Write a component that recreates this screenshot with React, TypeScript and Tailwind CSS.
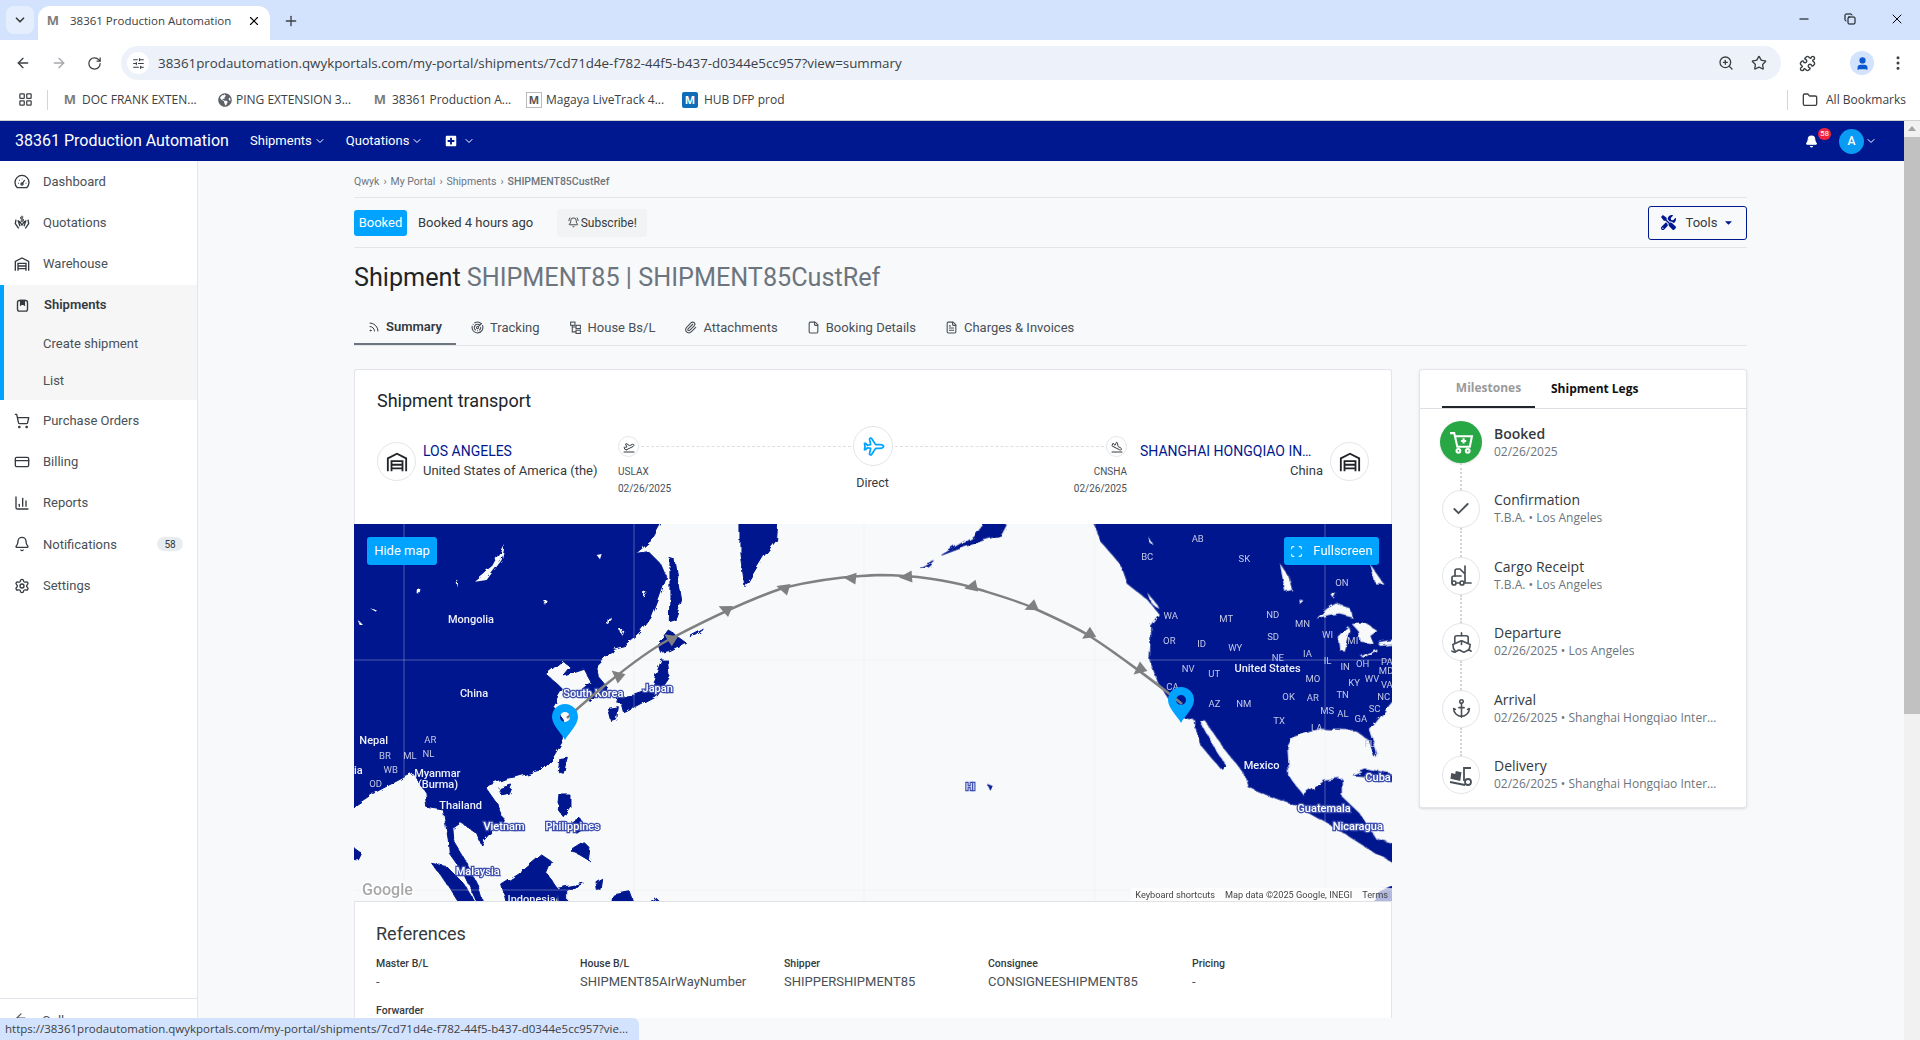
import {
  Anchor,
  ArrowLeft,
  ArrowRight,
  BellRing,
  Bell,
  ChartColumn,
  Check,
  ChevronDown,
  CreditCard,
  Copy,
  File,
  FileText,
  Folder,
  Forklift,
  LayoutGrid,
  Minus,
  MoreVertical,
  Paperclip,
  Plane,
  PlaneLanding,
  PlaneTakeoff,
  Plus,
  Puzzle,
  Radar,
  RotateCw,
  Rss,
  Scan,
  Settings,
  Ship,
  ShoppingCart,
  SlidersHorizontal,
  Star,
  User,
  X,
  ZoomIn,
} from "lucide-react";
import { FaPlusSquare, FaTools, FaCaretDown, FaGlobeAmericas } from "react-icons/fa";

const NAVY = "#00188f";
const SEA = "#f8f9fb";

// land outlines traced in crop coordinates, west and east halves of the map
const westLand = [
  "-20,-20 950,-20 905,60 858,100 895,95 935,135 950,170 925,240 905,290 870,340 830,375 790,385 770,410 740,440 745,470 770,500 720,545 700,510 725,490 700,445 640,465 660,440 640,425 590,465 620,490 640,510 610,560 640,600 640,660 610,710 570,750 500,770 470,775 405,800 440,850 460,900 395,975 380,940 330,905 308,920 312,965 345,1020 385,1100 405,1170 392,1170 340,1060 298,1000 295,960 280,870 230,862 225,815 190,760 165,770 70,820 -20,880",
  "245,1030 290,1040 340,1090 390,1170 340,1170 290,1090",
  "1170,-20 1285,-20 1280,60 1240,110 1185,200 1170,100",
  "960,115 975,120 995,240 975,300 958,305 960,230",
  "955,330 1010,370 960,395 935,400 925,370",
  "935,420 955,420 960,470 920,530 860,562 800,548 805,530 855,525 900,510",
  "775,565 805,560 800,600 785,605",
  "815,555 845,548 840,565 820,575",
  "630,715 652,712 640,760 625,755",
  "450,805 485,795 475,820 455,825",
  "630,825 660,825 660,860 640,890 625,870",
  "665,905 690,895 705,925 680,940",
  "660,990 700,965 720,985 715,1020 690,1005",
  "455,1095 510,1060 575,1005 605,1025 590,1060 625,1110 610,1170 475,1170",
  "622,1105 700,1090 650,1112 650,1170 625,1170",
  "738,1085 755,1075 750,1110 742,1112",
  "790,1125 840,1115 860,1170 780,1170",
  "880,1170 920,1135 925,1170",
  "-20,960 35,1000 25,1020 -20,1015",
  "1020,350 1060,328 1040,345",
];

const westLakes = [
  "465,75 455,120 410,180 375,185 430,140",
  "200,210 215,208 212,220 200,220",
  "320,190 328,185 325,205",
  "60,265 80,270 78,275",
  "580,240 590,240 585,255",
  "740,105 755,102 750,118",
  "880,215 890,215 878,235",
  "810,330 820,330 815,345",
  "770,295 785,292 768,312",
  "25,300 42,318 32,318",
];

const eastLand = [
  "680,-20 720,70 770,130 790,190 850,240 885,285 860,320 855,420 880,490 905,530 940,590 985,600 1012,600 1070,690 1125,760 1135,800 1190,825 1280,860 1380,920 1440,960 1500,1000 1570,1040 1570,980 1500,960 1450,880 1400,830 1400,775 1350,780 1290,825 1250,770 1245,680 1260,650 1340,625 1440,630 1480,660 1495,710 1500,700 1480,630 1570,510 1570,-20",
  "985,600 995,600 1035,680 1072,740 1060,748 1000,675 985,620",
  "262,105 350,50 400,-20 445,15 430,45 380,60 300,90",
  "205,145 240,125 225,140",
  "395,797 408,802 402,813",
  "1435,765 1470,750 1570,770 1570,785 1500,770",
  "1500,1120 1570,1085 1570,1170 1490,1170",
];

const eastLakes = [
  "1330,295 1360,265 1385,250 1425,265 1430,290 1395,280 1365,285",
  "1395,390 1390,350 1420,318 1425,340 1410,395",
  "1430,312 1470,310 1500,330 1480,345 1490,370 1455,365 1450,335",
  "1455,410 1500,385 1500,392 1465,412",
  "1505,370 1570,358 1570,372 1510,378",
  "1225,130 1250,170 1260,210 1240,215",
  "1480,130 1520,190 1495,190",
  "850,220 885,270 860,250",
  "730,120 755,165 740,155",
  "850,50 865,75 855,70",
  "1280,240 1295,245 1285,255",
  "1370,220 1385,220 1378,235",
];

type MapLabel = { x: number; y: number; t: string; big?: boolean; halo?: boolean };

const westLabels: MapLabel[] = [
  { x: 363, y: 297, t: "Mongolia", big: true },
  { x: 372, y: 518, t: "China", big: true },
  { x: 730, y: 518, t: "South Korea", big: true, halo: true },
  { x: 923, y: 503, t: "Japan", big: true, halo: true },
  { x: 71, y: 659, t: "Nepal", big: true },
  { x: 241, y: 656, t: "AR" },
  { x: 105, y: 705, t: "BR" },
  { x: 180, y: 705, t: "ML" },
  { x: 235, y: 700, t: "NL" },
  { x: 122, y: 747, t: "WB" },
  { x: 77, y: 790, t: "OD" },
  { x: 25, y: 750, t: "ia", big: true },
  { x: 262, y: 759, t: "Myanmar", big: true },
  { x: 264, y: 791, t: "(Burma)", big: true },
  { x: 332, y: 855, t: "Thailand", big: true },
  { x: 462, y: 917, t: "Vietnam", big: true, halo: true },
  { x: 668, y: 917, t: "Philippines", big: true, halo: true },
  { x: 383, y: 1052, t: "Malaysia", big: true, halo: true },
  { x: 545, y: 1138, t: "Indonesia", big: true },
];

const eastLabels: MapLabel[] = [
  ...[
    ["AB", 991, 55],
    ["BC", 847, 107],
    ["SK", 1124, 115],
    ["ON", 1402, 185],
    ["WA", 914, 285],
    ["MT", 1072, 293],
    ["ND", 1205, 283],
    ["MN", 1290, 310],
    ["WI", 1361, 343],
    ["MI", 1433, 361],
    ["OR", 910, 361],
    ["ID", 1002, 369],
    ["WY", 1098, 380],
    ["SD", 1206, 348],
    ["NE", 1219, 410],
    ["IA", 1304, 400],
    ["IL", 1361, 421],
    ["IN", 1411, 437],
    ["OH", 1461, 429],
    ["PA", 1530, 423],
    ["MD", 1528, 449],
    ["NV", 964, 445],
    ["UT", 1038, 459],
    ["MO", 1319, 474],
    ["KY", 1437, 486],
    ["WV", 1488, 473],
    ["VA", 1530, 491],
    ["CA", 919, 497],
    ["AZ", 1039, 550],
    ["NM", 1122, 550],
    ["OK", 1250, 529],
    ["AR", 1319, 531],
    ["TN", 1404, 523],
    ["NC", 1521, 527],
    ["SC", 1495, 564],
    ["MS", 1360, 570],
    ["AL", 1405, 580],
    ["GA", 1456, 594],
    ["TX", 1223, 601],
    ["LA", 1330, 621],
    ["FL", 1481, 670],
  ].map(([t, x, y]) => ({ t: t as string, x: x as number, y: y as number })),
  { x: 1190, y: 445, t: "United States", big: true },
  { x: 1173, y: 734, t: "Mexico", big: true },
  { x: 1351, y: 863, t: "Guatemala", big: true, halo: true },
  { x: 1447, y: 918, t: "Nicaragua", big: true, halo: true },
  { x: 1505, y: 772, t: "Cuba", big: true, halo: true },
  { x: 343, y: 798, t: "HI", halo: true },
];

// route markers, each one points back along the line towards Shanghai
const arrows = [
  [617, 675, 220],
  [670, 638, 213],
  [725, 609, 204],
  [783, 588, 197],
  [850, 578, 186],
  [906, 577, 176],
  [971, 587, 167],
  [1031, 607, 157],
  [1088, 635, 148],
  [1139, 670, 141],
];

function MapLabelText({ label, px, py }: { label: MapLabel; px: number; py: number }) {
  return (
    <text
      x={px}
      y={py + 4}
      textAnchor="middle"
      fontFamily="Roboto, sans-serif"
      fontSize={label.big ? 11 : 9.5}
      fontWeight={label.big ? 500 : 400}
      fill={label.halo ? "#ffffff" : label.big ? "#eef0fa" : "#c3c8e6"}
      stroke={label.halo ? "#3d4fb0" : "none"}
      strokeWidth={label.halo ? 2.5 : 0}
      paintOrder="stroke"
    >
      {label.t}
    </text>
  );
}

function Pin({ x, y }: { x: number; y: number }) {
  return (
    <g transform={`translate(${x} ${y})`}>
      <path
        fillRule="evenodd"
        fill="#00a3ff"
        d="M0 22C-3 16-13 7-13 -1a13 13 0 0 1 26 0C13 7 3 16 0 22ZM0 -6a5 5 0 1 0 0 10a5 5 0 1 0 0-10Z"
      />
    </g>
  );
}

function WorldMap() {
  return (
    <svg viewBox="354 524 1038 378" className="block h-[378px] w-[1038px] bg-[#f8f9fb]">
      <defs>
        <filter id="coast" x="0" y="0" width="1" height="1" filterUnits="objectBoundingBox">
          <feTurbulence type="fractalNoise" baseFrequency="0.09" numOctaves="3" seed="7" result="noise" />
          <feDisplacementMap in="SourceGraphic" in2="noise" scale="6" />
        </filter>
      </defs>
      <g filter="url(#coast)">
        <g transform="translate(350 520) scale(0.3333)" fill={NAVY}>
          {westLand.map((p, i) => (
            <polygon key={i} points={p} strokeLinejoin="round" stroke={NAVY} strokeWidth={3} />
          ))}
          {westLakes.map((p, i) => (
            <polygon key={i} points={p} fill={SEA} />
          ))}
        </g>
        <g transform="translate(850 520) scale(0.3509 0.3333)" fill={NAVY}>
          {eastLand.map((p, i) => (
            <polygon key={i} points={p} strokeLinejoin="round" stroke={NAVY} strokeWidth={3} />
          ))}
          {eastLakes.map((p, i) => (
            <polygon key={i} points={p} fill={SEA} />
          ))}
        </g>
      </g>
      {[404, 634, 864, 1095, 1325].map((x) => (
        <g key={x}>
          <line x1={x} y1={524} x2={x} y2={902} stroke="#ffffff" strokeOpacity={0.28} />
          <line x1={x} y1={524} x2={x} y2={902} stroke="#888888" strokeOpacity={0.07} />
        </g>
      ))}
      {[660, 890].map((y) => (
        <g key={y}>
          <line x1={354} y1={y} x2={1392} y2={y} stroke="#ffffff" strokeOpacity={0.28} />
          <line x1={354} y1={y} x2={1392} y2={y} stroke="#888888" strokeOpacity={0.07} />
        </g>
      ))}
      {westLabels.map((l) => (
        <MapLabelText key={l.t} label={l} px={350 + l.x / 3} py={520 + l.y / 3} />
      ))}
      {eastLabels.map((l) => (
        <MapLabelText key={l.t} label={l} px={850 + l.x / 2.85} py={520 + l.y / 3} />
      ))}
      <path
        d="M567 718C595 693 640 655 670 639C710 618 745 601 783 588C815 580 850 576 880 575C915 575 950 581 971 587C1000 596 1015 600 1031 607C1060 620 1075 627 1088 635C1115 652 1160 686 1182 704"
        fill="none"
        stroke="#808080"
        strokeWidth={2.5}
      />
      {arrows.map(([x, y, r]) => (
        <polygon
          key={x}
          points="-7,0 6,-6 6,6"
          fill="#808080"
          transform={`translate(${x} ${y}) rotate(${r - 180})`}
        />
      ))}
      <Pin x={565} y={718} />
      <Pin x={1181} y={701} />
      <text
        x={362}
        y={895}
        fontFamily="Roboto, sans-serif"
        fontSize={16}
        fontWeight={500}
        fill="#a8a8a8"
        stroke="#ffffff"
        strokeWidth={3}
        paintOrder="stroke"
      >
        Google
      </text>
    </svg>
  );
}

function Favicon() {
  return <span className="w-4 text-center text-[13px] font-bold leading-none text-[#7d7d7d]">M</span>;
}

function BrowserChrome() {
  return (
    <div className="font-['Open_Sans',sans-serif] text-[#3c4043]">
      <div className="flex h-10 items-end bg-[#d3e3fd]">
        <div className="mb-[6px] ml-[6px] mr-1 flex h-7 w-[28px] items-center justify-center rounded-lg bg-[#e5eefc]">
          <ChevronDown size={14} strokeWidth={3} />
        </div>
        <div className="flex h-[34px] w-[232px] items-center rounded-t-xl bg-white pb-[5px] pl-[7px] pr-[9px]">
          <Favicon />
          <span className="ml-[9px] flex-1 truncate text-[11.5px]">38361 Production Automation</span>
          <X size={14} strokeWidth={2} className="text-black" />
        </div>
        <Plus size={16} className="mb-[11px] ml-[13px]" />
        <div className="ml-auto mb-[13px] flex items-center gap-[33px] pr-[15px] text-black">
          <Minus size={14} />
          <Copy size={12} />
          <X size={16} strokeWidth={1.5} />
        </div>
      </div>
      <div className="flex h-[44px] items-center bg-white pl-[15px] pt-[2px]">
        <ArrowLeft size={16} />
        <ArrowRight size={16} className="ml-[20px] text-[#a4a7ab]" />
        <RotateCw size={15} className="ml-[20px]" />
        <div className="ml-[19px] flex h-[34px] w-[1660px] items-center rounded-full bg-[#edf2fa] pl-[6px] pr-[14px]">
          <span className="flex h-[22px] w-[22px] items-center justify-center rounded-full bg-white">
            <SlidersHorizontal size={13} />
          </span>
          <span className="ml-[9px] flex-1 text-[13.35px]">
            38361prodautomation.qwykportals.com/my-portal/shipments/7cd71d4e-f782-44f5-b437-d0344e5cc957?view=summary
          </span>
          <ZoomIn size={16} />
          <Star size={16} className="ml-[17px]" />
        </div>
        <Puzzle size={17} className="ml-[18px]" />
        <span className="ml-[34px] flex h-[24px] w-[24px] items-center justify-center rounded-full bg-[#d3e3fd]">
          <User size={15} fill="#0b57d0" className="text-[#0b57d0]" />
        </span>
        <MoreVertical size={18} className="ml-[15px]" />
      </div>
      <div className="flex h-[37px] items-center border-b border-[#d0d0d0] bg-white pb-[5px] pl-[18px] text-[12px]">
        <LayoutGrid size={15} />
        <div className="ml-[14px] mr-[14px] h-[20px] w-px bg-[#c7d7f0]" />
        <div className="flex w-[156px] items-center gap-[4px]">
          <Favicon />
          <span>DOC FRANK EXTEN...</span>
        </div>
        <div className="flex w-[154px] items-center gap-[4px]">
          <FaGlobeAmericas size={14} className="text-[#5f6368]" />
          <span>PING EXTENSION 3...</span>
        </div>
        <div className="flex w-[154px] items-center gap-[4px]">
          <Favicon />
          <span>38361 Production A...</span>
        </div>
        <div className="flex w-[156px] items-center gap-[4px]">
          <span className="flex h-4 w-4 items-center justify-center border border-[#bbb] text-[11px] font-bold leading-none text-[#555]">M</span>
          <span>Magaya LiveTrack 4...</span>
        </div>
        <div className="flex items-center gap-[6px]">
          <span className="flex h-4 w-4 items-center justify-center rounded-[2px] bg-[#0f6cb6] text-[11px] font-bold leading-none text-white">M</span>
          <span>HUB DFP prod</span>
        </div>
        <div className="ml-auto flex items-center pr-[14px]">
          <div className="mr-[14px] h-[20px] w-px bg-[#c7d7f0]" />
          <Folder size={16} />
          <span className="ml-[8px]">All Bookmarks</span>
        </div>
      </div>
    </div>
  );
}

function TopNav() {
  return (
    <div className="flex h-10 items-center bg-[#00188f] pl-[15px] pr-[27px] text-white">
      <span className="w-[235px] text-[16px]">38361 Production Automation</span>
      <span className="text-[13px]">Shipments</span>
      <ChevronDown size={12} className="ml-[2px]" />
      <span className="ml-[20px] text-[13px]">Quotations</span>
      <ChevronDown size={12} className="ml-[2px]" />
      <FaPlusSquare size={12} className="ml-[22px]" />
      <ChevronDown size={12} className="ml-[6px]" />
      <div className="relative ml-auto mr-[21px]">
        <Bell size={13} fill="white" />
        <span className="absolute -right-[13px] -top-[7px] flex h-3 w-[13px] items-center justify-center rounded-full bg-[#f0243f] text-[8px] leading-none">58</span>
      </div>
      <span className="flex h-[25px] w-[25px] items-center justify-center rounded-full bg-[#0a9bf5] text-[12px] font-medium">A</span>
      <ChevronDown size={12} className="ml-[1px]" />
    </div>
  );
}

type IconProps = { size?: number; className?: string };

function DashboardIcon({ size = 16, className }: IconProps) {
  return (
    <svg width={size} height={size} viewBox="0 0 24 24" fill="none" stroke="currentColor" strokeWidth="2" className={className}>
      <path d="M5 20.5a10.5 10.5 0 1 1 14 0z" />
      <path d="M12 15l4-6M6 14h1M17.5 14h1M8 9l.7.7M12 7v1" />
      <circle cx="12" cy="15" r="1.6" />
    </svg>
  );
}

function QuotationIcon({ size = 16, className }: IconProps) {
  return (
    <svg width={size} height={size} viewBox="0 0 24 24" fill="none" stroke="currentColor" strokeWidth="2" className={className}>
      <path d="M3 7l-1 6 5 7M21 7l1 6-5 7" />
      <path d="M6 8l3 9M18 8l-3 9M8 9l4 6 4-6" />
      <path d="M14 3h-3a1.2 1.2 0 0 0 0 3h2a1.2 1.2 0 0 1 0 3h-3M12 1v10" strokeWidth="1.4" />
    </svg>
  );
}

function GarageIcon({ size = 16, className }: IconProps) {
  return (
    <svg width={size} height={size} viewBox="0 0 24 24" fill="none" stroke="currentColor" strokeWidth="2" className={className}>
      <path d="M2 22V8l10-5 10 5v14" />
      <path d="M6 22V11h12v11M6 15h12M6 19h12" />
    </svg>
  );
}

function ShipmentBoxIcon({ size = 16, className }: IconProps) {
  return (
    <svg width={size} height={size} viewBox="0 0 24 24" fill="none" stroke="currentColor" strokeWidth="2.2" className={className}>
      <rect x="4" y="4" width="16" height="17" rx="3" />
      <path d="M9 4h6v7l-3-2-3 2z" fill="currentColor" />
    </svg>
  );
}

function HouseBlIcon({ size = 13, className }: IconProps) {
  return (
    <svg width={size} height={size} viewBox="0 0 24 24" fill="none" stroke="currentColor" strokeWidth="2" className={className}>
      <rect x="3" y="2" width="8" height="6" />
      <rect x="13" y="8" width="8" height="6" />
      <rect x="13" y="17" width="8" height="6" />
      <path d="M6 8v12h7M6 11h7" />
    </svg>
  );
}

function CartPlusIcon() {
  return (
    <svg width="25" height="25" viewBox="0 0 24 24" fill="none" stroke="white" strokeWidth="2">
      <path d="M1 3h4l3 13h12l2-10H6" />
      <path d="M14 8v5M11.5 10.5h5" />
      <circle cx="9" cy="20" r="1.8" />
      <circle cx="18" cy="20" r="1.8" />
    </svg>
  );
}

const sideTop = [
  { label: "Dashboard", Icon: DashboardIcon },
  { label: "Quotations", Icon: QuotationIcon },
  { label: "Warehouse", Icon: GarageIcon },
];

const sideBottom = [
  { label: "Purchase Orders", Icon: ShoppingCart },
  { label: "Billing", Icon: CreditCard },
  { label: "Reports", Icon: ChartColumn },
  { label: "Notifications", Icon: Bell, badge: "58" },
  { label: "Settings", Icon: Settings },
];

function SideRow({ label, Icon, badge }: { label: string; Icon: React.ComponentType<IconProps>; badge?: string }) {
  return (
    <div className="flex h-[41.25px] items-center pl-[14px] pr-[14px] text-[13px] text-[#495057]">
      <Icon size={16} className="text-[#343a40]" />
      <span className="ml-[13px] flex-1">{label}</span>
      {badge && (
        <span className="flex h-[14px] w-[26px] items-center justify-center rounded-full bg-[#e9ecef] text-[10px] text-[#343a40]">
          {badge}
        </span>
      )}
    </div>
  );
}

function Sidebar() {
  return (
    <div className="relative flex w-[198px] shrink-0 flex-col border-r border-[#e3e5ea] bg-white">
      <div className="h-[124px]">
        {sideTop.map((s) => (
          <SideRow key={s.label} {...s} />
        ))}
      </div>
      <div className="h-[115px] border-l-4 border-[#00a3ff] bg-[#f6f6f6] text-[13px] text-[#495057]">
        <div className="flex h-10 items-center pl-[11px]">
          <ShipmentBoxIcon size={15} className="text-[#343a40]" />
          <span className="ml-[14px] font-semibold text-[#343a40]">Shipments</span>
        </div>
        <div className="flex h-[37px] items-center pl-[39px]">Create shipment</div>
        <div className="flex h-[38px] items-center pl-[39px]">List</div>
      </div>
      {sideBottom.map((s) => (
        <SideRow key={s.label} {...s} />
      ))}
      <div className="mt-auto flex h-[42px] items-start border-t border-[#e3e5ea] pl-[14px] pt-[12px] text-[13px] text-[#495057]">
        <ArrowLeft size={14} />
        <span className="ml-[14px]">Collapse</span>
      </div>
    </div>
  );
}

const tabs = [
  { label: "Tracking", Icon: Radar },
  { label: "House Bs/L", Icon: HouseBlIcon },
  { label: "Attachments", Icon: Paperclip },
  { label: "Booking Details", Icon: File },
  { label: "Charges & Invoices", Icon: FileText },
];

function Header() {
  return (
    <>
      <div className="flex h-[37px] items-center gap-[4px] border-b border-[#e3e5ea] pt-[6px] text-[10.5px] text-[#6c757d]">
        <span>Qwyk</span>
        <span>›</span>
        <span>My Portal</span>
        <span>›</span>
        <span>Shipments</span>
        <span>›</span>
        <span className="font-medium">SHIPMENT85CustRef</span>
      </div>
      <div className="flex h-[50px] items-center border-b border-[#e3e5ea] text-[13px]">
        <span className="flex h-[26px] w-[53px] items-center justify-center rounded-[3px] bg-[#00a3ff] text-white">Booked</span>
        <span className="ml-[11px] text-[#343a40]">Booked 4 hours ago</span>
        <span className="ml-[24px] flex h-7 w-[90px] items-center justify-center gap-[2px] rounded-[3px] bg-[#f1f3f5] text-[12px] text-[#343a40]">
          <BellRing size={11} />
          Subscribe!
        </span>
        <span className="ml-auto flex h-[34px] w-[99px] items-center justify-center rounded-[3px] border border-[#00188f] text-[#343a40]">
          <FaTools size={15} className="text-[#00188f]" />
          <span className="ml-[10px]">Tools</span>
          <FaCaretDown size={11} className="ml-[6px] text-[#00188f]" />
        </span>
      </div>
      <div className="flex h-[60px] items-center text-[25.2px] text-[#212529]">
        Shipment<span className="ml-[6px] text-[#6c757d]">SHIPMENT85 | SHIPMENT85CustRef</span>
      </div>
      <div className="flex h-[38px] border-b border-[#e3e5ea] pt-[2px] text-[13px] text-[#495057]">
        <div className="flex w-[102px] items-center justify-center gap-[6px] border-b-2 border-[#6c757d] font-semibold text-[#343a40]">
          <Rss size={12} />
          Summary
        </div>
        {tabs.map(({ label, Icon }) => (
          <div key={label} className="ml-px flex items-center gap-[6px] px-[14px]">
            <Icon size={13} />
            {label}
          </div>
        ))}
      </div>
    </>
  );
}

function CircleIcon({ size, children }: { size: string; children: React.ReactNode }) {
  return (
    <span className={`flex shrink-0 items-center justify-center rounded-full border border-[#e3e5ea] bg-white ${size}`}>
      {children}
    </span>
  );
}

function TransportCard() {
  return (
    <div className="h-[155px] rounded-t-[3px] border-x border-t border-[#e3e5ea] bg-white px-[22px] pt-[20px]">
      <div className="text-[18px] leading-[22px] text-[#212529]">Shipment transport</div>
      <div className="mt-[14px] flex">
        <div className="flex w-[241px] shrink-0 pt-[16px]">
          <CircleIcon size="h-[39px] w-[39px]">
            <GarageIcon size={22} className="text-[#212529]" />
          </CircleIcon>
          <div className="ml-[7px]">
            <div className="text-[14px] leading-[19px] text-[#00188f]">LOS ANGELES</div>
            <div className="text-[13px] leading-[19px] text-[#343a40]">United States of America (the)</div>
          </div>
        </div>
        <div className="grid flex-1 grid-cols-[1fr_40px_1fr]">
          <div className="pt-[10px]">
            <div className="flex items-center">
              <CircleIcon size="h-[21px] w-[21px]">
                <PlaneTakeoff size={12} className="text-[#343a40]" />
              </CircleIcon>
              <div className="mx-[2px] flex-1 border-t border-dashed border-[#dcdfe3]" />
            </div>
            <div className="mt-[6px] text-[10px] leading-[17px] text-[#495057]">
              <div>USLAX</div>
              <div>02/26/2025</div>
            </div>
          </div>
          <div className="flex flex-col items-center">
            <CircleIcon size="h-[40px] w-[40px]">
              <Plane size={21} className="rotate-45 text-[#00a3ff]" />
            </CircleIcon>
            <div className="mt-[9px] whitespace-nowrap text-[12.5px] leading-[16px] text-[#343a40]">Direct</div>
          </div>
          <div className="pt-[10px]">
            <div className="flex items-center">
              <div className="mx-[2px] flex-1 border-t border-dashed border-[#dcdfe3]" />
              <CircleIcon size="h-[21px] w-[21px]">
                <PlaneLanding size={12} className="text-[#343a40]" />
              </CircleIcon>
            </div>
            <div className="mt-[6px] text-right text-[10px] leading-[17px] text-[#495057]">
              <div>CNSHA</div>
              <div>02/26/2025</div>
            </div>
          </div>
        </div>
        <div className="flex w-[242px] shrink-0 justify-end pt-[16px]">
          <div className="mr-[7px] w-[183px] text-right">
            <div className="w-[176px] truncate text-left text-[14px] leading-[19px] text-[#00188f]">SHANGHAI HONGQIAO INTERNATIONAL AIRPORT</div>
            <div className="text-[13px] leading-[19px] text-[#343a40]">China</div>
          </div>
          <CircleIcon size="h-[39px] w-[39px]">
            <GarageIcon size={22} className="text-[#212529]" />
          </CircleIcon>
        </div>
      </div>
    </div>
  );
}

function MapPanel() {
  return (
    <div className="relative h-[378px] overflow-hidden border-b border-[#dfe2e6]">
      <WorldMap />
      <span className="absolute left-[13px] top-[13px] flex h-7 w-[70px] items-center justify-center rounded-[3px] bg-[#00a3ff] text-[13px] text-white">
        Hide map
      </span>
      <span className="absolute right-[13px] top-[13px] flex h-7 w-[95px] items-center justify-center gap-[10px] rounded-[3px] bg-[#00a3ff] text-[13px] text-white">
        <Scan size={13} />
        Fullscreen
      </span>
      <div className="absolute bottom-0 right-0 flex h-[13px] items-center gap-[10px] bg-white/70 px-[4px] text-[9.2px] text-[#444]">
        <span>Keyboard shortcuts</span>
        <span>Map data ©2025 Google, INEGI</span>
        <span>Terms</span>
      </div>
    </div>
  );
}

const references = [
  { label: "Master B/L", value: "-" },
  { label: "House B/L", value: "SHIPMENT85AIrWayNumber" },
  { label: "Shipper", value: "SHIPPERSHIPMENT85" },
  { label: "Consignee", value: "CONSIGNEESHIPMENT85" },
  { label: "Pricing", value: "-" },
];

function ReferencesCard() {
  return (
    <div className="border-x border-[#e3e5ea] bg-white px-[21px] pt-[21px]">
      <div className="text-[18px] leading-[22px] text-[#343a40]">References</div>
      <div className="mt-[12px] grid grid-cols-[repeat(5,204px)]">
        {references.map((r) => (
          <div key={r.label}>
            <div className="text-[10.5px] font-medium leading-[14px] text-[#343a40]">{r.label}</div>
            <div className="mt-[3px] text-[13px] leading-[16px] text-[#495057]">{r.value}</div>
          </div>
        ))}
      </div>
      <div className="mt-[14px] text-[10.5px] font-medium leading-[14px] text-[#343a40]">Forwarder</div>
    </div>
  );
}

function DeliveryIcon() {
  return (
    <svg width="24" height="24" viewBox="0 0 24 24" fill="none" stroke="#495057" strokeWidth="1.8">
      <path d="M1 19l15 3" />
      <path d="M15 18V5h7" />
      <circle cx="19" cy="19" r="3" />
      <path d="M3 11l4 1 .5-3 4 1-1 7-8-2z" fill="#495057" />
    </svg>
  );
}

const milestones = [
  { title: "Confirmation", sub: "T.B.A. • Los Angeles", icon: <Check size={20} strokeWidth={2.2} className="text-[#495057]" /> },
  { title: "Cargo Receipt", sub: "T.B.A. • Los Angeles", icon: <Forklift size={24} strokeWidth={1.7} className="text-[#495057]" /> },
  { title: "Departure", sub: "02/26/2025 • Los Angeles", icon: <Ship size={23} strokeWidth={1.7} className="text-[#495057]" /> },
  { title: "Arrival", sub: "02/26/2025 • Shanghai Hongqiao International Airport", icon: <Anchor size={21} strokeWidth={1.8} className="text-[#495057]" /> },
  { title: "Delivery", sub: "02/26/2025 • Shanghai Hongqiao International Airport", icon: <DeliveryIcon /> },
];

function MilestonesCard() {
  return (
    <div className="h-[439px] w-[328px] shrink-0 rounded-[3px] border border-[#e3e5ea] bg-white font-['Open_Sans',sans-serif] shadow-sm">
      <div className="flex h-[39px] border-b border-[#dcdfe3] pl-[22px] text-[12px] font-bold">
        <div className="flex w-[93px] items-center justify-center border-b-2 border-[#212529] text-[#9a9a9a]">Milestones</div>
        <div className="ml-[16px] flex items-center text-[#111]">Shipment Legs</div>
      </div>
      <div className="px-[20px] pt-[12px]">
        <div className="flex h-[69px] gap-[12px]">
          <div className="flex w-[42px] flex-col items-center">
            <span className="flex h-[42px] w-[42px] items-center justify-center rounded-full bg-[#28a745] shadow">
              <CartPlusIcon />
            </span>
            <div className="flex-1 border-l-2 border-dotted border-[#d4d4d4]" />
          </div>
          <div className="mt-[3px]">
            <div className="text-[14px] font-semibold leading-[19px] text-[#343a40]">Booked</div>
            <div className="text-[12px] leading-[18px] text-[#6c757d]">02/26/2025</div>
          </div>
        </div>
        {milestones.map((m, i) => (
          <div key={m.title} className={`flex gap-[12px] ${i < 4 ? "h-[66.5px]" : "h-[40px]"}`}>
            <div className="flex w-[42px] flex-col items-center">
              <CircleIcon size="h-[38px] w-[38px] border-[#d9d9d9]">{m.icon}</CircleIcon>
              {i < 4 && <div className="flex-1 border-l-2 border-dotted border-[#d4d4d4]" />}
            </div>
            <div className="w-[225px]">
              <div className="text-[14px] leading-[19px] text-[#343a40]">{m.title}</div>
              <div className="truncate text-[12px] leading-[18px] text-[#6c757d]">{m.sub}</div>
            </div>
          </div>
        ))}
      </div>
    </div>
  );
}

function ScrollBar() {
  return (
    <div className="flex w-[16px] shrink-0 flex-col items-center bg-[#f1f1f1]">
      <div className="mt-[5px] h-0 w-0 border-x-[4px] border-b-[5px] border-x-transparent border-b-[#a3a3a3]" />
      <div className="mt-[6px] h-[577px] w-full bg-[#c1c1c1]" />
    </div>
  );
}

export default function App() {
  return (
    <div className="relative flex h-[1040px] w-[1920px] flex-col overflow-hidden bg-[#f8f9fb] font-['Roboto',sans-serif]">
      <BrowserChrome />
      <div className="flex min-h-0 flex-1">
        <div className="flex min-w-0 flex-1 flex-col">
          <TopNav />
          <div className="flex min-h-0 flex-1">
            <Sidebar />
            <div className="min-w-0 flex-1 overflow-hidden pl-[156px]">
              <div className="w-[1393px]">
                <Header />
                <div className="mt-[23px] flex gap-[27px]">
                  <div className="w-[1038px] shrink-0">
                    <TransportCard />
                    <MapPanel />
                    <ReferencesCard />
                  </div>
                  <MilestonesCard />
                </div>
              </div>
            </div>
          </div>
        </div>
        <ScrollBar />
      </div>
      <div className="absolute bottom-0 left-0 flex h-[22px] w-[639px] items-center overflow-hidden whitespace-nowrap rounded-tr-md bg-[#d3e3fd] pl-[5px] font-['Open_Sans',sans-serif] text-[11.5px] text-[#3c4043]">
        https://38361prodautomation.qwykportals.com/my-portal/shipments/7cd71d4e-f782-44f5-b437-d0344e5cc957?vie...
      </div>
    </div>
  );
}
